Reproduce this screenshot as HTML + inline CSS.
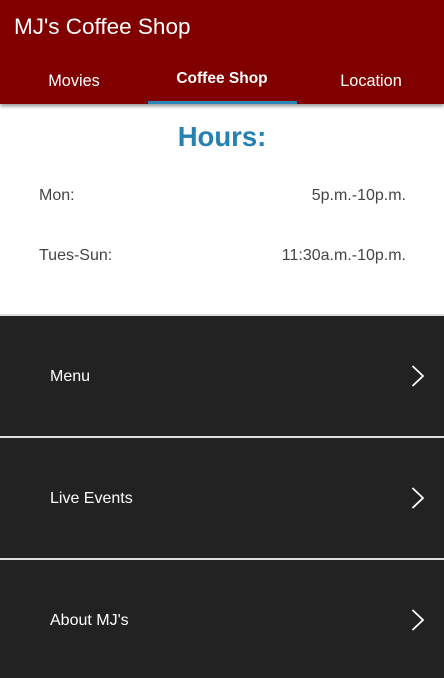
<!DOCTYPE html>
<html><head><style>
*{margin:0;padding:0;box-sizing:border-box}
body{width:444px;height:678px;overflow:hidden;font-family:"Liberation Sans",sans-serif;background:#fff;position:relative}
.hdr{position:absolute;left:0;top:0;width:444px;height:104px;background:#800000;box-shadow:0 2px 4px rgba(0,0,0,.45);z-index:2}
.title{position:absolute;left:14px;top:14px;color:#fff;font-size:22.5px}
.tab{position:absolute;color:#fff;font-size:16.3px;width:148px;text-align:center}
.ind{position:absolute;left:148px;top:101px;width:149px;height:3px;background:#2a86b8}
h1{position:absolute;top:121px;width:444px;text-align:center;color:#2581b3;font-size:27.5px;font-weight:bold}
.r{position:absolute;font-size:16px;color:#444}
.sep{position:absolute;left:0;width:444px;height:2px;background:#ddd}
.p{position:absolute;left:0;width:444px;background:#222;color:#fff;font-size:16px}
.p span{position:absolute;left:50px}
.p svg{position:absolute;left:410px}
</style></head><body>
<div class="hdr">
<div class="title">MJ's Coffee Shop</div>
<div class="tab" style="left:0;top:72px">Movies</div>
<div class="tab" style="left:148px;font-weight:bold;top:70px;font-size:15.5px">Coffee Shop</div>
<div class="tab" style="left:297px;width:148px;top:72px">Location</div>
<div class="ind"></div>
</div>
<h1>Hours:</h1>
<div class="r" style="left:39px;top:187px">Mon:</div>
<div class="r" style="right:38px;top:187px">5p.m.-10p.m.</div>
<div class="r" style="left:39px;top:247px">Tues-Sun:</div>
<div class="r" style="right:38px;top:247px">11:30a.m.-10p.m.</div>
<div class="sep" style="top:314px"></div>
<div class="p" style="top:316px;height:120px"><span style="top:52px">Menu</span><svg style="top:49px" width="16" height="22"><path d="M2.5 1 L13 11 L2.5 21" stroke="#fff" stroke-width="1.8" fill="none"/></svg></div>
<div class="sep" style="top:436px"></div>
<div class="p" style="top:438px;height:120px"><span style="top:52px">Live Events</span><svg style="top:49px" width="16" height="22"><path d="M2.5 1 L13 11 L2.5 21" stroke="#fff" stroke-width="1.8" fill="none"/></svg></div>
<div class="sep" style="top:558px"></div>
<div class="p" style="top:560px;height:118px"><span style="top:52px">About MJ's</span><svg style="top:49px" width="16" height="22"><path d="M2.5 1 L13 11 L2.5 21" stroke="#fff" stroke-width="1.8" fill="none"/></svg></div>
</body></html>
